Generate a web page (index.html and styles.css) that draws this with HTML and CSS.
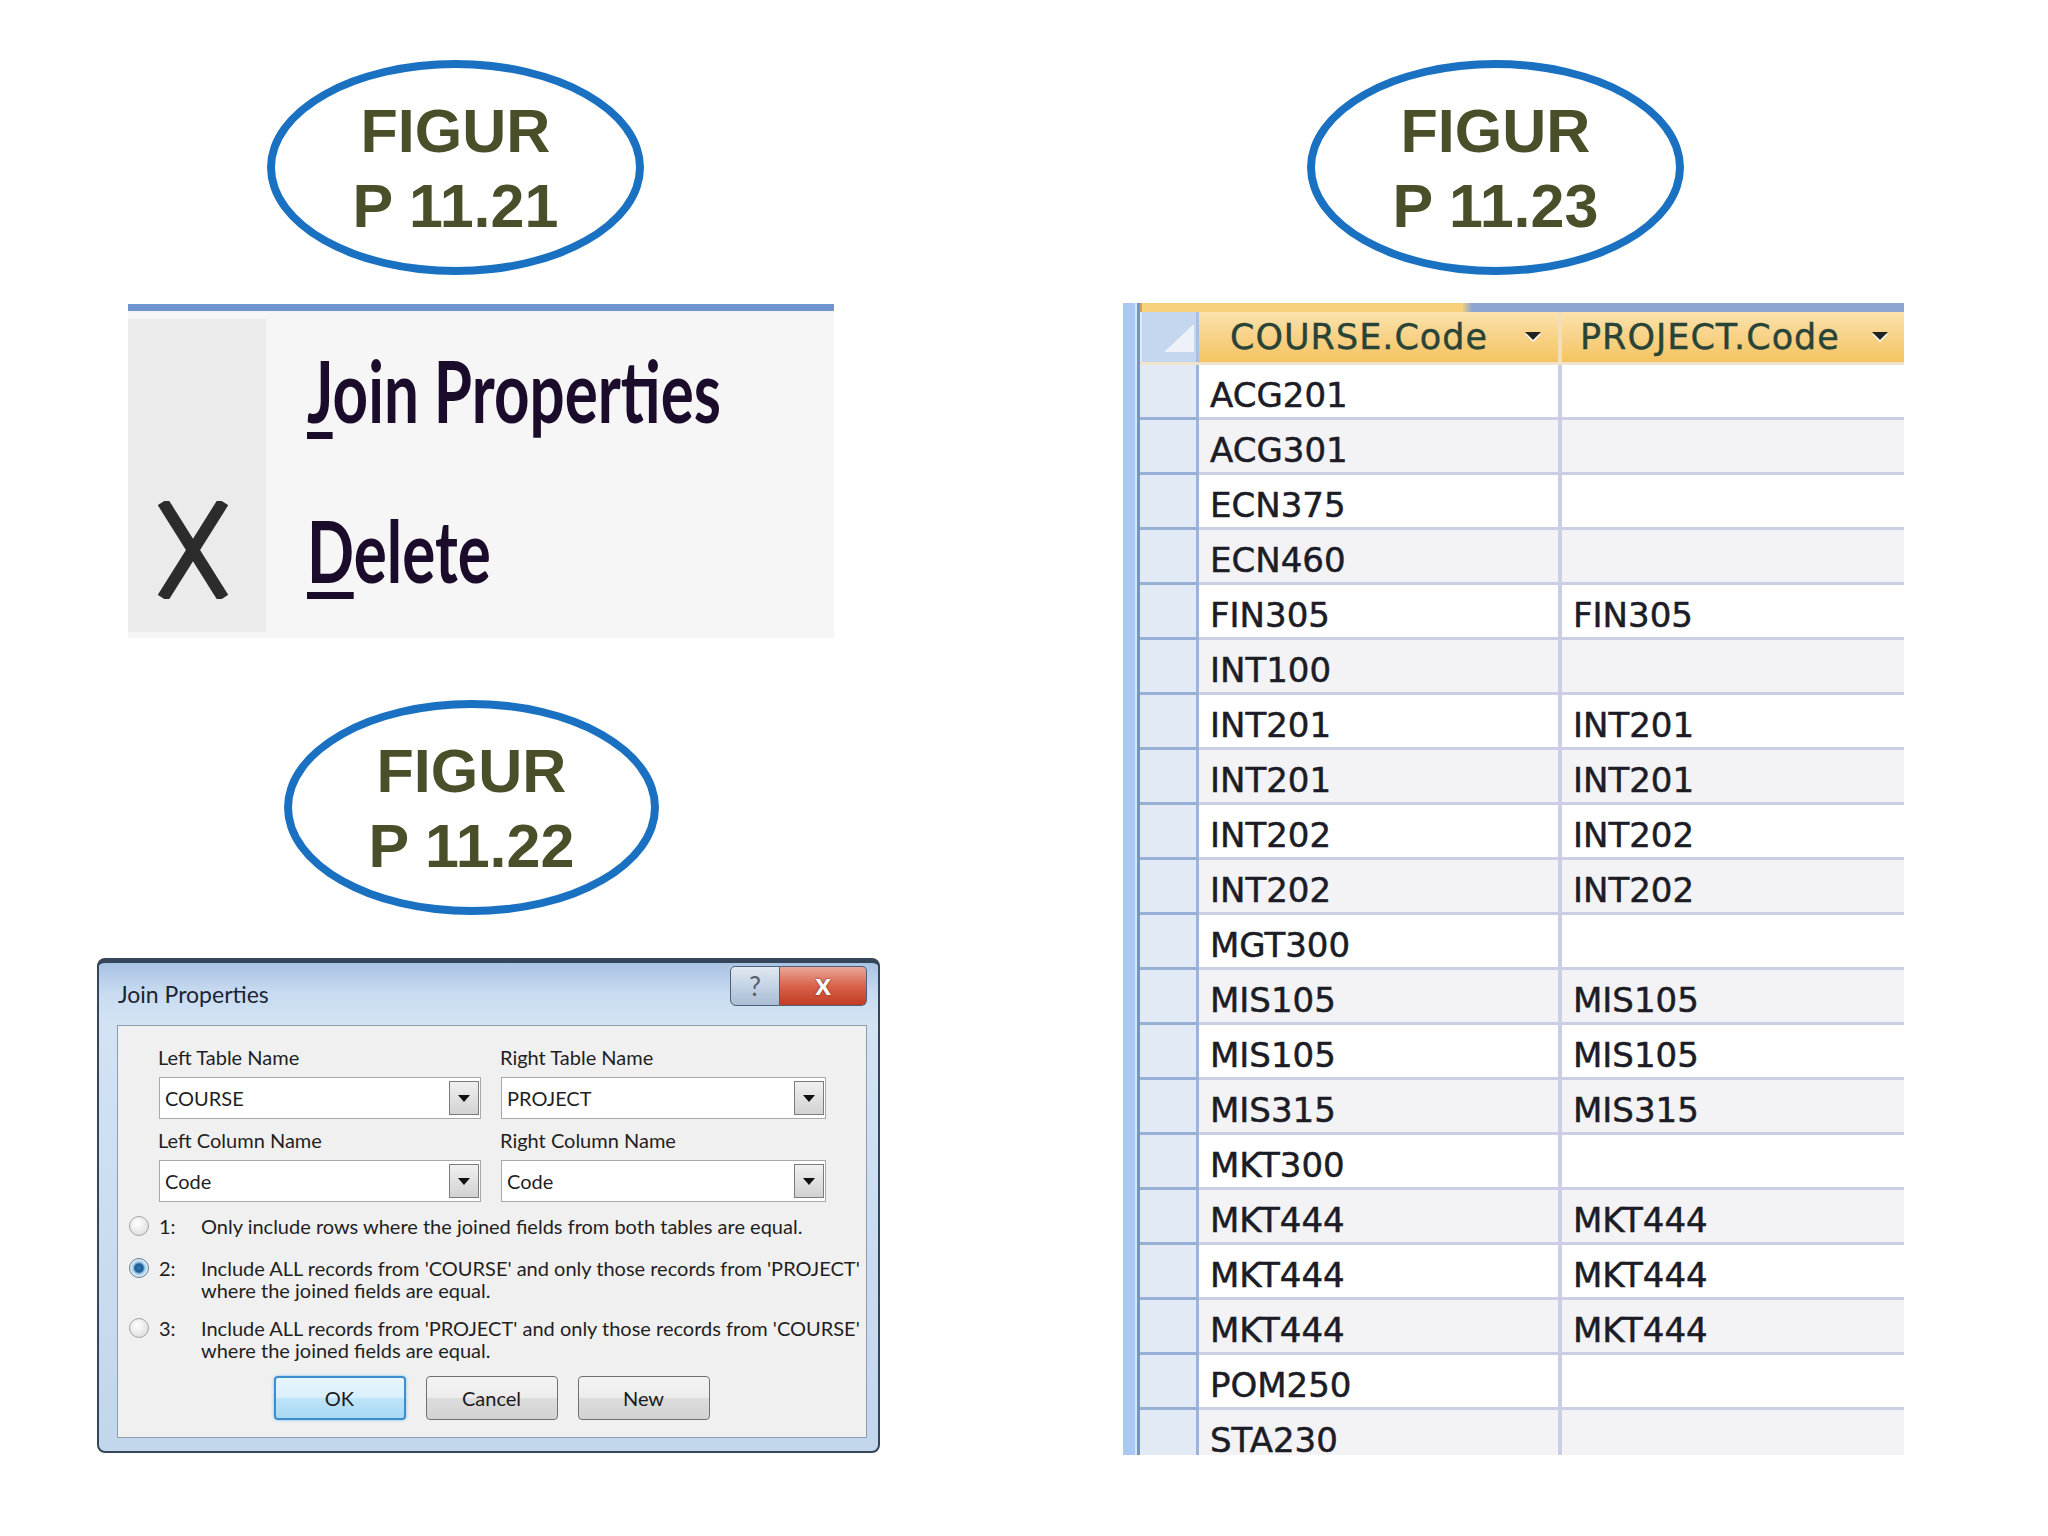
FILE: index.html
```html
<!DOCTYPE html>
<html lang="en">
<head>
    <meta charset="UTF-8">
    <title>Figur P 11.21 - P 11.23</title>
    <link rel="stylesheet" href="styles.css">
</head>
<body>
    <div class="page">
        <div class="col-left">
            <div class="badge badge-a">
                <div class="badge-text">FIGUR<br>P 11.21</div>
            </div>

            <!-- context menu on the join line -->
            <div class="ctx-menu">
                <div class="ctx-list">
                    <div class="ctx-item first">
                        <div class="ctx-icon"></div>
                        <span class="ctx-label"><span class="key">J</span>oin Properties</span>
                    </div>
                    <div class="ctx-item">
                        <div class="ctx-icon">
                            <svg width="70" height="98" viewBox="0 0 70 98">
                                <line x1="8" y1="6" x2="62" y2="92" stroke="#2c2c2c" stroke-width="12" stroke-linecap="square"/>
                                <line x1="62" y1="6" x2="8" y2="92" stroke="#2c2c2c" stroke-width="12" stroke-linecap="square"/>
                            </svg>
                        </div>
                        <span class="ctx-label"><span class="key">D</span>elete</span>
                    </div>
                </div>
            </div>

            <div class="badge badge-b">
                <div class="badge-text">FIGUR<br>P 11.22</div>
            </div>

            <!-- Join Properties dialog -->
            <div class="dialog">
                <div class="dlg-title">
                    <span class="dlg-caption">Join Properties</span>
                    <div class="dlg-ctrls">
                        <div class="dlg-help">?</div>
                        <div class="dlg-close">x</div>
                    </div>
                </div>
                <div class="dlg-panel">
                    <div class="fields">
                        <div class="field-col">
                            <div class="lbl">Left Table Name</div>
                            <div class="combo"><span>COURSE</span><div class="combo-btn"><i></i></div></div>
                            <div class="lbl second">Left Column Name</div>
                            <div class="combo"><span>Code</span><div class="combo-btn"><i></i></div></div>
                        </div>
                        <div class="field-col right">
                            <div class="lbl">Right Table Name</div>
                            <div class="combo"><span>PROJECT</span><div class="combo-btn"><i></i></div></div>
                            <div class="lbl second">Right Column Name</div>
                            <div class="combo"><span>Code</span><div class="combo-btn"><i></i></div></div>
                        </div>
                    </div>

                    <div class="opt opt1">
                        <div class="radio"></div>
                        <div class="opt-num">1:</div>
                        <div class="opt-text">Only include rows where the joined fields from both tables are equal.</div>
                    </div>
                    <div class="opt opt2">
                        <div class="radio checked"></div>
                        <div class="opt-num">2:</div>
                        <div class="opt-text">Include ALL records from 'COURSE' and only those records from 'PROJECT'<br>where the joined fields are equal.</div>
                    </div>
                    <div class="opt opt3">
                        <div class="radio"></div>
                        <div class="opt-num">3:</div>
                        <div class="opt-text">Include ALL records from 'PROJECT' and only those records from 'COURSE'<br>where the joined fields are equal.</div>
                    </div>

                    <div class="dlg-buttons">
                        <div class="btn default">OK</div>
                        <div class="btn">Cancel</div>
                        <div class="btn">New</div>
                    </div>
                </div>
            </div>
        </div>

        <div class="col-right">
            <div class="badge badge-c">
                <div class="badge-text">FIGUR<br>P 11.23</div>
            </div>

            <!-- query result datasheet -->
            <div class="datasheet">
                <div class="ds-edge"></div>
                <div class="ds-grid">
                    <div class="ds-tab"></div>
                    <div class="ds-head">
                        <div class="ds-corner">
                            <svg width="34" height="32" viewBox="0 0 34 32"><polygon points="2,30 32,30 32,2" fill="#eef2f8"/></svg>
                        </div>
                        <div class="ds-hcell c1">
                            <span>COURSE.Code</span>
                            <svg class="ds-arrow" width="22" height="14" viewBox="0 0 22 14"><polygon points="3,4 19,4 11,12" fill="#fff"/><polygon points="3,2 19,2 11,10" fill="#222"/></svg>
                        </div>
                        <div class="ds-hcell c2">
                            <span>PROJECT.Code</span>
                            <svg class="ds-arrow" width="22" height="14" viewBox="0 0 22 14"><polygon points="3,4 19,4 11,12" fill="#fff"/><polygon points="3,2 19,2 11,10" fill="#222"/></svg>
                        </div>
                    </div>

                    <div class="ds-row"><div class="ds-sel"></div><div class="ds-cell c1">ACG201</div><div class="ds-cell c2"></div></div>
                    <div class="ds-row"><div class="ds-sel"></div><div class="ds-cell c1">ACG301</div><div class="ds-cell c2"></div></div>
                    <div class="ds-row"><div class="ds-sel"></div><div class="ds-cell c1">ECN375</div><div class="ds-cell c2"></div></div>
                    <div class="ds-row"><div class="ds-sel"></div><div class="ds-cell c1">ECN460</div><div class="ds-cell c2"></div></div>
                    <div class="ds-row"><div class="ds-sel"></div><div class="ds-cell c1">FIN305</div><div class="ds-cell c2">FIN305</div></div>
                    <div class="ds-row"><div class="ds-sel"></div><div class="ds-cell c1">INT100</div><div class="ds-cell c2"></div></div>
                    <div class="ds-row"><div class="ds-sel"></div><div class="ds-cell c1">INT201</div><div class="ds-cell c2">INT201</div></div>
                    <div class="ds-row"><div class="ds-sel"></div><div class="ds-cell c1">INT201</div><div class="ds-cell c2">INT201</div></div>
                    <div class="ds-row"><div class="ds-sel"></div><div class="ds-cell c1">INT202</div><div class="ds-cell c2">INT202</div></div>
                    <div class="ds-row"><div class="ds-sel"></div><div class="ds-cell c1">INT202</div><div class="ds-cell c2">INT202</div></div>
                    <div class="ds-row"><div class="ds-sel"></div><div class="ds-cell c1">MGT300</div><div class="ds-cell c2"></div></div>
                    <div class="ds-row"><div class="ds-sel"></div><div class="ds-cell c1">MIS105</div><div class="ds-cell c2">MIS105</div></div>
                    <div class="ds-row"><div class="ds-sel"></div><div class="ds-cell c1">MIS105</div><div class="ds-cell c2">MIS105</div></div>
                    <div class="ds-row"><div class="ds-sel"></div><div class="ds-cell c1">MIS315</div><div class="ds-cell c2">MIS315</div></div>
                    <div class="ds-row"><div class="ds-sel"></div><div class="ds-cell c1">MKT300</div><div class="ds-cell c2"></div></div>
                    <div class="ds-row"><div class="ds-sel"></div><div class="ds-cell c1">MKT444</div><div class="ds-cell c2">MKT444</div></div>
                    <div class="ds-row"><div class="ds-sel"></div><div class="ds-cell c1">MKT444</div><div class="ds-cell c2">MKT444</div></div>
                    <div class="ds-row"><div class="ds-sel"></div><div class="ds-cell c1">MKT444</div><div class="ds-cell c2">MKT444</div></div>
                    <div class="ds-row"><div class="ds-sel"></div><div class="ds-cell c1">POM250</div><div class="ds-cell c2"></div></div>
                    <div class="ds-row last"><div class="ds-sel"></div><div class="ds-cell c1">STA230</div><div class="ds-cell c2"></div></div>
                </div>
            </div>
        </div>
    </div>
</body>
</html>
```

FILE: styles.css
```css
body {
    margin: 0;
    background: #ffffff;
    font-family: Lato, "Liberation Sans", sans-serif;
}
.page {
    display: flex;
    align-items: flex-start;
    padding-top: 60px;
}
.col-left {
    display: flex;
    flex-direction: column;
    align-items: flex-start;
    width: 783px;
    margin-left: 97px;
}
.col-right {
    display: flex;
    flex-direction: column;
    align-items: flex-start;
    width: 784px;
    margin-left: 240px;
}

/* blue oval labels */
.badge {
    box-sizing: border-box;
    width: 377px;
    height: 215px;
    border: 8px solid #1b71c1;
    border-radius: 50%;
    display: flex;
    align-items: center;
    justify-content: center;
}
.badge-a { margin-left: 170px; }
.badge-b { margin-left: 187px; margin-top: 62px; width: 375px; }
.badge-c { margin-left: 187px; }
.badge-text {
    font-family: "Liberation Sans", Arial, sans-serif;
    font-weight: bold;
    font-size: 61px;
    line-height: 75px;
    color: #4a4f29;
    text-align: center;
    padding-top: 3px;
}

/* context menu */
.ctx-menu {
    box-sizing: border-box;
    width: 706px;
    height: 334px;
    margin-top: 29px;
    margin-left: 31px;
    border-top: 7px solid #7094cf;
    background: #f6f6f7;
    padding: 8px 0 6px 0;
}
.ctx-list {
    height: 100%;
    background: linear-gradient(90deg, #ebebeb 0 138px, #f6f6f7 138px);
}
.ctx-item {
    display: flex;
    align-items: flex-start;
    height: 154px;
}
.ctx-item.first { height: 160px; }
.ctx-icon {
    width: 138px;
    flex: none;
    padding: 22px 0 0 30px;
    box-sizing: border-box;
}
.ctx-label {
    display: inline-block;
    margin-left: 41px;
    margin-top: 21px;
    font-family: Lato, sans-serif;
    font-weight: 700;
    font-size: 86px;
    line-height: 100px;
    color: #1a0c2a;
    white-space: nowrap;
    transform: scaleX(0.72);
    transform-origin: left top;
}
.key {
    text-decoration: underline;
    text-decoration-thickness: 7px;
    text-underline-offset: 9px;
}

/* dialog */
.dialog {
    box-sizing: border-box;
    width: 783px;
    margin-top: 43px;
    border: 2px solid #36465a;
    border-top-width: 5px;
    border-radius: 8px;
    background: linear-gradient(180deg, #a9c3e3 0, #c8dbf0 30px, #d3e3f4 60px, #c2d6ec 100%);
    padding: 0 11px 13px 18px;
    color: #1f1f1f;
}
.dlg-title {
    display: flex;
    align-items: flex-start;
    height: 62px;
}
.dlg-caption {
    padding: 17px 0 0 1px;
    font-size: 23px;
    line-height: 28px;
    color: #1c2533;
}
.dlg-ctrls {
    display: flex;
    margin-left: auto;
    margin-top: 3px;
}
.dlg-help,
.dlg-close {
    height: 40px;
    box-sizing: border-box;
    border: 1px solid #4f5f75;
    display: flex;
    align-items: center;
    justify-content: center;
    font-size: 26px;
    font-weight: 700;
}
.dlg-help {
    width: 50px;
    border-radius: 5px 0 0 6px;
    background: linear-gradient(180deg, #dfe8f2 0, #c4d3e4 50%, #a9bdd4 100%);
    color: #555f6c;
    font-weight: 400;
}
.dlg-close {
    width: 87px;
    border-left: none;
    border-radius: 0 5px 6px 0;
    background: linear-gradient(180deg, #e9a89a 0, #d9634c 50%, #c23b22 100%);
    color: #ffffff;
    font-size: 30px;
    padding-bottom: 6px;
    text-shadow: 0 0 2px #5a1a10;
}
.dlg-panel {
    border: 1px solid #8b9db3;
    background: #f0f0f0;
    padding: 18px 0 17px 11px;
}
.fields {
    display: flex;
    gap: 20px;
    margin-left: 30px;
}
.field-col {
    width: 322px;
}
.field-col.right { width: 325px; }
.lbl {
    font-size: 20px;
    line-height: 26px;
    margin-bottom: 7px;
    margin-left: -1px;
}
.lbl.second { margin-top: 8px; }
.combo {
    box-sizing: border-box;
    height: 42px;
    border: 1px solid #a8a8a8;
    background: #ffffff;
    display: flex;
    align-items: center;
    padding-left: 5px;
    font-size: 20px;
}
.combo span { flex: 1; }
.combo-btn {
    box-sizing: border-box;
    width: 30px;
    height: 34px;
    margin-right: 1px;
    border: 1px solid #7b7b7b;
    background: linear-gradient(180deg, #f0f0f0, #d2d2d2);
    display: flex;
    align-items: center;
    justify-content: center;
}
.combo-btn i {
    border-top: 7px solid #111;
    border-left: 6px solid transparent;
    border-right: 6px solid transparent;
}
.opt {
    display: flex;
    align-items: flex-start;
    font-size: 20px;
    line-height: 22px;
}
.opt-text { white-space: nowrap; }
.opt1 { margin-top: 13px; }
.opt2 { margin-top: 20px; }
.opt3 { margin-top: 16px; }
.radio {
    box-sizing: border-box;
    width: 20px;
    height: 20px;
    flex: none;
    margin: 1px 10px 0 0;
    border-radius: 50%;
    border: 1px solid #a3a3a3;
    background: radial-gradient(circle at 40% 35%, #ffffff 0, #e2e2e2 70%);
}
.radio.checked {
    border-color: #5d7a98;
    background: radial-gradient(circle at 50% 50%, #2f77b4 0, #1d5b93 4px, #9fd0f0 6px, #f2f2f2 9px);
}
.opt-num {
    width: 42px;
    flex: none;
}
.dlg-buttons {
    display: flex;
    justify-content: center;
    gap: 20px;
    margin-top: 15px;
    padding-right: 12px;
}
.btn {
    box-sizing: border-box;
    width: 132px;
    height: 44px;
    border: 1px solid #707070;
    border-radius: 4px;
    background: linear-gradient(180deg, #f4f4f4 0, #ececec 50%, #dcdcdc 51%, #d2d2d2 100%);
    display: flex;
    align-items: center;
    justify-content: center;
    font-size: 20px;
    color: #1b1b1b;
}
.btn.default {
    border: 2px solid #3c8fcc;
    box-shadow: 0 0 3px #72bbe8;
    background: linear-gradient(180deg, #e8f6fd 0, #d8effb 50%, #bee4f8 51%, #a8d9f4 100%);
}

/* datasheet */
.datasheet {
    display: flex;
    width: 784px;
    height: 1152px;
    margin-top: 28px;
    font-family: "DejaVu Sans", Verdana, sans-serif;
}
.ds-edge {
    width: 20px;
    flex: none;
    background: linear-gradient(90deg, #ffffff 0 3px, #a9c8f3 3px 15px, #d6e4f7 15px 17px, #7394c6 17px 20px);
}
.ds-grid {
    width: 764px;
}
.ds-tab {
    height: 9px;
    background: linear-gradient(90deg, #c9a566 0 2px, #f7d17c 2px 322px, #8ba6d0 332px);
}
.ds-head {
    display: flex;
    height: 53px;
    box-sizing: border-box;
    border-bottom: 3px solid #efe3cc;
}
.ds-corner {
    box-sizing: border-box;
    width: 59px;
    padding: 10px 0 0 20px;
    background: #c5d7ee;
    border-left: 2px solid #e1e9f4;
    border-right: 3px solid #a9bfdf;
}
.ds-hcell {
    display: flex;
    align-items: center;
    justify-content: space-between;
    box-sizing: border-box;
    background: linear-gradient(180deg, #fbe3ae 0, #f8d38a 45%, #f5c462 100%);
    font-size: 35px;
    letter-spacing: 1px;
    color: #294436;
    -webkit-text-stroke: 0.4px #294436;
}
.ds-hcell.c1 {
    width: 363px;
    padding: 0 14px 0 31px;
    border-right: 4px solid #f1dfba;
}
.ds-hcell.c2 {
    width: 342px;
    padding: 0 13px 0 18px;
}
.ds-arrow { display: block; }
.ds-row {
    display: flex;
    height: 55px;
    background: #ffffff;
}
.ds-row:nth-of-type(even) .ds-cell { background: #f3f3f5; }
.ds-sel {
    box-sizing: border-box;
    width: 59px;
    background: #e2eaf6;
    border-right: 3px solid #9cb4d8;
    border-bottom: 3px solid #97afd4;
}
.ds-cell {
    box-sizing: border-box;
    height: 55px;
    padding: 8px 0 0 11px;
    line-height: 44px;
    font-size: 34px;
    color: #1c1c26;
    -webkit-text-stroke: 0.5px #1c1c26;
    border-bottom: 3px solid #cbcfe6;
    background: #ffffff;
}
.ds-cell.c1 {
    width: 363px;
    border-right: 4px solid #cbcfe6;
}
.ds-cell.c2 {
    width: 342px;
}
.ds-row.last {
    height: 45px;
}
.ds-row.last .ds-cell {
    height: 45px;
    padding-top: 15px;
    line-height: 30px;
    border-bottom: none;
}
.ds-row.last .ds-sel {
    border-bottom: none;
}
```
